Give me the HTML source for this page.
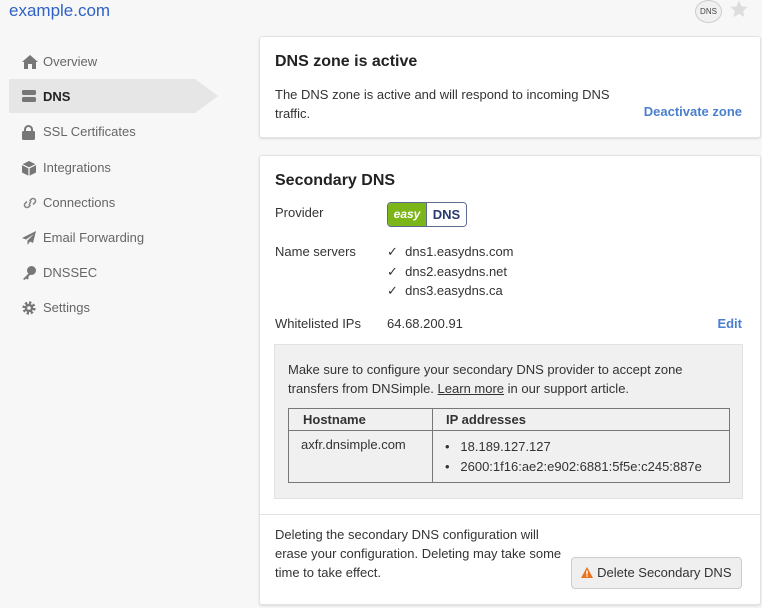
<!DOCTYPE html>
<html><head><style>
body{margin:0;width:762px;height:608px;background:#f7f7f7;font-family:"Liberation Sans",sans-serif;color:#333;position:relative;overflow:hidden;font-size:13px}
.a{position:absolute;white-space:nowrap}
.nav{position:absolute;left:22px;font-size:13px;color:#666;white-space:nowrap;width:200px}
.nav svg{position:absolute;left:0;top:1px}
.nav span{position:absolute;left:21px;top:0;white-space:nowrap}
.card{position:absolute;left:259px;width:500px;background:#fff;border:1px solid #e3e3e3;border-radius:3px;box-shadow:0 1px 2px rgba(0,0,0,.12)}
.blue{color:#4a7fd0;font-weight:bold}
</style></head><body>
<div class="a" style="left:9px;top:1px;font-size:17px;color:#2f62c4">example.com</div>
<div class="a" style="left:695px;top:0;width:25px;height:21px;border:1px solid #ccc;border-radius:50%;background:#f0f0f0;font-size:8px;text-align:center;line-height:21px;color:#444">DNS</div>
<svg class="a" style="left:729px;top:0" width="20" height="19" viewBox="0 0 24 24"><path d="M12 1l3.3 7 7.5.8-5.6 5.1 1.6 7.5L12 17.5 5.2 21.4l1.6-7.5L1.2 8.8 8.7 8z" fill="#ddd"/></svg>

<div class="a" style="left:9px;top:79px;width:186px;height:34px;background:#e6e6e6"></div>
<svg class="a" style="left:195px;top:79px" width="23" height="34"><path d="M0 0L23 17L0 34z" fill="#e6e6e6"/></svg>

<div class="nav" style="top:54px"><svg width="16" height="14" viewBox="0 0 16 14"><path d="M8 0L0 7h2v7h4V9h4v5h4V7h2z" fill="#777"/></svg><span>Overview</span></div>
<div class="nav" style="top:89px;color:#222;font-weight:bold"><svg width="14" height="12" viewBox="0 0 14 12"><rect x="0" y="0" width="14" height="5" rx="1.5" fill="#777"/><rect x="0" y="7" width="14" height="5" rx="1.5" fill="#777"/></svg><span>DNS</span></div>
<div class="nav" style="top:124px"><svg width="13" height="15" viewBox="0 0 13 15"><path d="M3 7V4.5a3.5 3.5 0 017 0V7" stroke="#777" stroke-width="2" fill="none"/><rect x="0" y="6" width="13" height="9" rx="1.5" fill="#777"/></svg><span>SSL Certificates</span></div>
<div class="nav" style="top:160px"><svg width="14" height="15" viewBox="0 0 14 15"><path d="M7 0l7 3.5v8L7 15 0 11.5v-8z" fill="#777"/><path d="M0 3.5L7 7l7-3.5M7 7v8" stroke="#fff" stroke-width="1.2" fill="none"/></svg><span>Integrations</span></div>
<div class="nav" style="top:195px"><svg width="16" height="14" viewBox="0 0 16 14"><path d="M7 9L9 5M5 5.5l-2 2a2.5 2.5 0 003.5 3.5l2-2M11 8.5l2-2A2.5 2.5 0 009.5 3l-2 2" stroke="#888" stroke-width="1.6" fill="none"/></svg><span>Connections</span></div>
<div class="nav" style="top:230px"><svg width="14" height="14" viewBox="0 0 14 14"><path d="M14 0L0 7l4 1.5L12 3 5.5 9.5V14l2.5-3.5 3 1.5z" fill="#777"/></svg><span>Email Forwarding</span></div>
<div class="nav" style="top:265px"><svg width="14" height="14" viewBox="0 0 14 14"><circle cx="9.5" cy="4.5" r="4.5" fill="#777"/><path d="M7 7L1 13l1.5 1L4 12.5l1.5 1L7 12l-1-1 3-3z" fill="#777"/></svg><span>DNSSEC</span></div>
<div class="nav" style="top:300px"><svg width="14" height="14" viewBox="0 0 14 14"><circle cx="7" cy="7" r="5" fill="none" stroke="#777" stroke-width="3.2" stroke-dasharray="2.2 1.7"/><circle cx="7" cy="7" r="4.2" fill="#777"/><circle cx="7" cy="7" r="1.8" fill="#f7f7f7"/></svg><span>Settings</span></div>

<div class="card" style="top:36px;height:100px">
<div class="a" style="left:15px;top:16px;font-size:16px;font-weight:bold;color:#222">DNS zone is active</div>
<div class="a" style="left:15px;top:48px;line-height:19px">The DNS zone is active and will respond to incoming DNS<br>traffic.</div>
<div class="a blue" style="right:18px;top:67px">Deactivate zone</div>
</div>

<div class="card" style="top:155px;height:448px">
<div class="a" style="left:15px;top:16px;font-size:16px;font-weight:bold;color:#222">Secondary DNS</div>
<div class="a" style="left:15px;top:49px">Provider</div>
<div class="a" style="left:127px;top:46px;width:78px;height:23px;border:1.5px solid #5a6a90;border-radius:4px;overflow:hidden;display:flex;font-weight:bold;font-style:italic;font-size:12px">
<div style="width:38px;background:#7cb518;color:#fff;text-align:center;line-height:23px">easy</div><div style="flex:1;background:#fff;border-left:1.5px solid #5a6a90;color:#2a3a70;font-style:normal;text-align:center;line-height:23px;font-size:13px">DNS</div></div>
<div class="a" style="left:15px;top:88px">Name servers</div>
<div class="a" style="left:127px;top:86px;line-height:19.5px">✓&nbsp; dns1.easydns.com<br>✓&nbsp; dns2.easydns.net<br>✓&nbsp; dns3.easydns.ca</div>
<div class="a" style="left:15px;top:160px">Whitelisted IPs</div>
<div class="a" style="left:127px;top:160px">64.68.200.91</div>
<div class="a blue" style="right:18px;top:160px">Edit</div>
<div class="a" style="left:14px;top:188px;width:467px;height:153px;background:#f0f0f0;border:1px solid #e2e2e2">
<div class="a" style="left:13px;top:15px;line-height:19px">Make sure to configure your secondary DNS provider to accept zone<br>transfers from DNSimple. <u>Learn more</u> in our support article.</div>
<table style="position:absolute;left:13px;top:63px;width:442px;border-collapse:collapse;font-size:13px">
<tr style="height:22px"><th style="border:1px solid #777;text-align:left;padding:0 0 0 14px;width:129px">Hostname</th><th style="border:1px solid #777;text-align:left;padding:0 0 0 13px">IP addresses</th></tr>
<tr style="height:52px;vertical-align:top"><td style="border:1px solid #777;padding:6px 0 0 12px">axfr.dnsimple.com</td><td style="border:1px solid #777;padding:6px 0 0 12px;line-height:20px">•&nbsp;&nbsp; 18.189.127.127<br>•&nbsp;&nbsp; 2600:1f16:ae2:e902:6881:5f5e:c245:887e</td></tr>
</table></div>
<div class="a" style="left:0;top:358px;width:500px;border-top:1px solid #e3e3e3"></div>
<div class="a" style="left:15px;top:369px;line-height:19px">Deleting the secondary DNS configuration will<br>erase your configuration. Deleting may take some<br>time to take effect.</div>
<div class="a" style="left:311px;top:401px;width:169px;height:30px;border:1px solid #ccc;border-radius:4px;background:#efefef;line-height:30px;text-align:center">
<svg width="12" height="11" viewBox="0 0 12 11" style="vertical-align:-1px"><path d="M6 0l6 11H0z" fill="#e8731f"/><rect x="5.3" y="3.5" width="1.4" height="4" fill="#fff"/><rect x="5.3" y="8.3" width="1.4" height="1.4" fill="#fff"/></svg> Delete Secondary DNS</div>
</div>
</body></html>
